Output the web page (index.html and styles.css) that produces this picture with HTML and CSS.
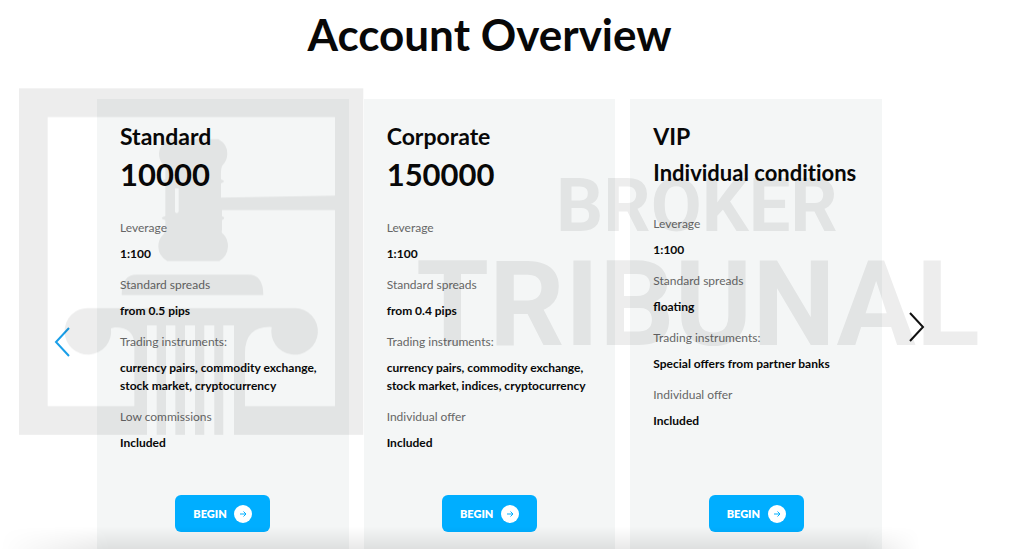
FILE: index.html
```html
<!DOCTYPE html>
<html lang="en">
<head>
<meta charset="utf-8">
<meta name="viewport" content="width=device-width, initial-scale=1">
<title>Account Overview</title>
<link rel="stylesheet" href="styles.css">
</head>
<body>
<main class="page">
  <h1 class="heading">Account Overview</h1>
  <div class="carousel">
    <button class="nav nav-prev" type="button" aria-label="Previous">
      <svg viewBox="0 0 16 32" class="chevron"><path d="M15 2 2 16l13 14"/></svg>
    </button>
    <div class="cards">
      <article class="card">
        <h2 class="name">Standard</h2>
        <p class="price">10000</p>
        <dl class="specs">
          <dt>Leverage</dt><dd>1:100</dd>
          <dt>Standard spreads</dt><dd>from 0.5 pips</dd>
          <dt>Trading instruments:</dt><dd>currency pairs, commodity exchange,<br>stock market, cryptocurrency</dd>
          <dt>Low commissions</dt><dd>Included</dd>
        </dl>
        <button class="begin" type="button">BEGIN <svg class="go" viewBox="0 0 18 18"><circle cx="9" cy="9" r="9"/><path d="M6 9h6M9.500 6.500 12 9l-2.500 2.500"/></svg></button>
      </article>
      <article class="card">
        <h2 class="name">Corporate</h2>
        <p class="price">150000</p>
        <dl class="specs">
          <dt>Leverage</dt><dd>1:100</dd>
          <dt>Standard spreads</dt><dd>from 0.4 pips</dd>
          <dt>Trading instruments:</dt><dd>currency pairs, commodity exchange,<br>stock market, indices, cryptocurrency</dd>
          <dt>Individual offer</dt><dd>Included</dd>
        </dl>
        <button class="begin" type="button">BEGIN <svg class="go" viewBox="0 0 18 18"><circle cx="9" cy="9" r="9"/><path d="M6 9h6M9.500 6.500 12 9l-2.500 2.500"/></svg></button>
      </article>
      <article class="card">
        <h2 class="name">VIP</h2>
        <p class="price price-text">Individual conditions</p>
        <dl class="specs">
          <dt>Leverage</dt><dd>1:100</dd>
          <dt>Standard spreads</dt><dd>floating</dd>
          <dt>Trading instruments:</dt><dd>Special offers from partner banks</dd>
          <dt>Individual offer</dt><dd>Included</dd>
        </dl>
        <button class="begin" type="button">BEGIN <svg class="go" viewBox="0 0 18 18"><circle cx="9" cy="9" r="9"/><path d="M6 9h6M9.500 6.500 12 9l-2.500 2.500"/></svg></button>
      </article>
    </div>
    <button class="nav nav-next" type="button" aria-label="Next">
      <svg viewBox="0 0 16 32" class="chevron"><path d="m1 2 13 14L1 30"/></svg>
    </button>
    <div class="shade"></div>
  </div>
  <svg class="watermark" viewBox="0 0 1024 554">
    <g opacity=".072">
      <g transform="translate(0 70) scale(.3333)">
        <path fill-rule="evenodd" d="M57 55H1090V1095H702V766H670V1095H643V766H613V1095H585V766H555V1095H526V766H498V1095H470V766H441V1095H57ZM143 141V1008H403V820Q400 772 345 772L333 775A70 70 0 1 1 265 714H885A70 70 0 1 1 815 771Q735 768 735 850V1008H1005V420L666 420V438Q680 444 666 450V480Q663 488 670 492Q684 505 684 530Q682 560 658 573H502Q475 558 475 530Q475 505 491 492Q497 485 496 450Q474 444 496 438V340Q474 334 496 328V300Q497 290 489 283Q477 272 477 250Q479 222 505 207H655Q682 222 682 250Q682 270 670 283Q661 290 663 328Q681 334 663 340V383L1005 377V141ZM525 355V425Q530 434 536 425V355Z"/>
        <path d="M365 675Q365 614 410 614H745Q790 614 790 675Z"/>
      </g>
      <text class="mark mark-small" x="556" y="231">BROKER</text>
      <text class="mark mark-large" x="416" y="345">TRIBUNAL</text>
    </g>
  </svg>
</main>
</body>
</html>
```
FILE: styles.css
```css
* { box-sizing: border-box; }
body {
  margin: 0;
  background: #fff;
  color: #080808;
  font-family: Lato, "Liberation Sans", sans-serif;
}
.page {
  position: relative;
  padding-bottom: 5px;
}
.heading {
  margin: 0;
  padding: 6px 99px 37px 54px;
  font-size: 44px;
  line-height: 56px;
  font-weight: 700;
  text-align: center;
}
.carousel {
  position: relative;
  display: flex;
  align-items: center;
  gap: 27px;
  padding: 0 99px 0 54px;
}
.nav {
  flex: none;
  width: 16px;
  padding: 0;
  border: 0;
  background: none;
  cursor: pointer;
}
.nav-prev { padding-top: 36px; color: #1a9fe8; }
.nav-next { padding-top: 6px; color: #111; }
.chevron {
  display: block;
  width: 16px;
  height: 32px;
  fill: none;
  stroke: currentColor;
  stroke-width: 2;
}
.cards {
  flex: 1;
  display: grid;
  grid-template-columns: repeat(3, minmax(0, 1fr));
  gap: 15px;
}
.card {
  display: flex;
  flex-direction: column;
  padding: 22px 0 17px 23px;
  background: #f4f6f6;
}
.name {
  margin: 0 0 3px;
  font-size: 23px;
  line-height: 30px;
  font-weight: 700;
}
.price {
  margin: 0 0 24px;
  font-size: 31px;
  line-height: 41px;
  font-weight: 700;
}
.price-text {
  font-size: 22px;
  line-height: 37px;
  font-variant-ligatures: none;
}
.specs {
  margin: 0 0 30px;
  font-size: 12px;
  line-height: 18px;
}
.specs dt { margin-bottom: 8px; color: #666; }
.specs dd { margin: 0 0 13px; font-weight: 700; white-space: nowrap; }
.begin {
  display: flex;
  align-items: center;
  align-self: center;
  justify-content: space-between;
  width: 95px;
  height: 37px;
  margin: auto 23px 0 0;
  padding: 0 18px;
  border: 0;
  border-radius: 6px;
  background: #00aeff;
  color: #fff;
  font-family: inherit;
  font-size: 11px;
  font-weight: 800;
  cursor: pointer;
}
.go { width: 18px; height: 18px; fill: #fff; }
.go path { fill: none; stroke: #00aeff; stroke-width: 1; }
.shade {
  position: absolute;
  inset: auto 104px 0 0;
  height: 22px;
  background: linear-gradient(transparent, rgba(0, 0, 0, .09));
  mask-image: linear-gradient(90deg, transparent, #000 12%, #000 94%, transparent);
  pointer-events: none;
}
.watermark {
  position: absolute;
  top: 0;
  left: 0;
  width: 100%;
  pointer-events: none;
}
.mark { font-family: Roboto, sans-serif; font-weight: 700; }
.mark-small { font-size: 74px; }
.mark-large { font-size: 118px; }
```
